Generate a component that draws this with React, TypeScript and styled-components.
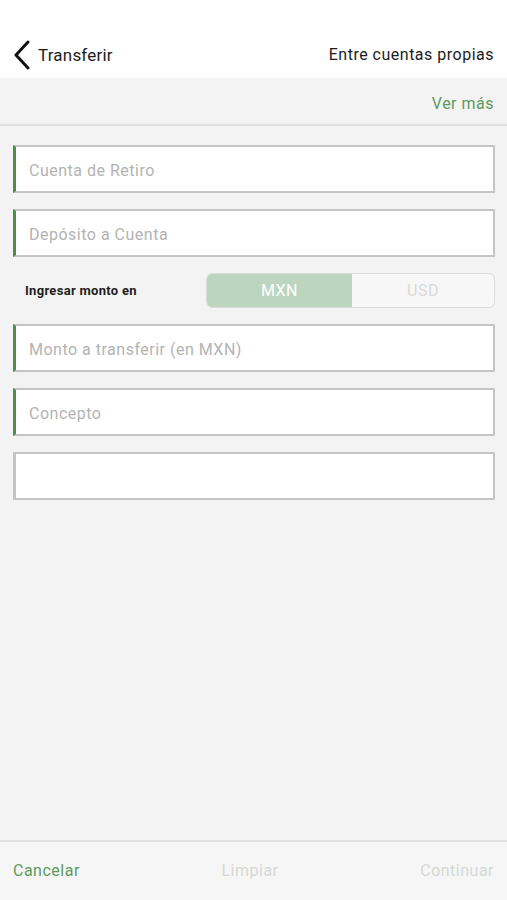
import styled, { createGlobalStyle } from "styled-components";

const GlobalStyle = createGlobalStyle`
  body {
    margin: 0;
    background: #f3f3f3;
    font-family: "Roboto", "Liberation Sans", sans-serif;
    letter-spacing: 0.5px;
  }
`;

export default function App() {
  return (
    <Page>
      <GlobalStyle />
      <Header>
        <BackButton>
          <svg width="18" height="30" viewBox="0 0 18 30">
            <path d="M15 2 L3 15 L15 28" fill="none" stroke="#111" strokeWidth="3" strokeLinecap="round" strokeLinejoin="round" />
          </svg>
          <Title>Transferir</Title>
        </BackButton>
        <Subtitle>Entre cuentas propias</Subtitle>
      </Header>
      <InfoBar>
        <GreenLink>Ver más</GreenLink>
      </InfoBar>
      <Form>
        <Field $marked placeholder="Cuenta de Retiro" />
        <Field $marked placeholder="Depósito a Cuenta" />
        <ToggleRow>
          <ToggleLabel>Ingresar monto en</ToggleLabel>
          <Segmented>
            <Segment $active>MXN</Segment>
            <Segment>USD</Segment>
          </Segmented>
        </ToggleRow>
        <Field $marked placeholder="Monto a transferir (en MXN)" />
        <Field $marked placeholder="Concepto" />
        <Field />
      </Form>
      <Footer>
        <FooterAction $enabled>Cancelar</FooterAction>
        <FooterAction>Limpiar</FooterAction>
        <FooterAction>Continuar</FooterAction>
      </Footer>
    </Page>
  );
}

const Page = styled.div`
  min-height: 100vh;
  display: flex;
  flex-direction: column;
  background: #f3f3f3;
`;

const Header = styled.div`
  height: 78px;
  box-sizing: border-box;
  padding: 31px 13px 0 13px;
  background: #ffffff;
  display: flex;
  align-items: center;
  justify-content: space-between;
`;

const BackButton = styled.div`
  display: flex;
  align-items: center;
  gap: 7px;
  svg {
    display: block;
  }
`;

const Title = styled.span`
  font-size: 17px;
  letter-spacing: 0.2px;
  color: #1c1c1c;
`;

const Subtitle = styled.span`
  font-size: 16px;
  color: #1c1c1c;
`;

const InfoBar = styled.div`
  height: 48px;
  box-sizing: border-box;
  padding: 4px 13px 0 13px;
  background: #f3f3f3;
  border-bottom: 2px solid #e1e1e1;
  display: flex;
  align-items: center;
  justify-content: flex-end;
`;

const GreenLink = styled.span`
  font-size: 16px;
  color: #5f9a5f;
`;

const Form = styled.div`
  flex: 1;
  display: flex;
  flex-direction: column;
  gap: 16px;
  padding: 19px 12px 0 13px;
`;

const Field = styled.input<{ $marked?: boolean }>`
  height: 48px;
  box-sizing: border-box;
  border: 2px solid #c4c4c4;
  border-left: 3px solid ${(p) => (p.$marked ? "#4a8f4a" : "#c4c4c4")};
  background: #ffffff;
  padding: 2px 13px 0 13px;
  font-family: inherit;
  font-size: 16px;
  letter-spacing: 0.5px;
  outline: none;
  &::placeholder {
    color: #b3b3b3;
  }
`;

const ToggleRow = styled.div`
  height: 35px;
  display: flex;
  align-items: center;
  justify-content: space-between;
  padding-left: 12px;
`;

const ToggleLabel = styled.span`
  font-size: 13px;
  font-weight: 700;
  letter-spacing: 0.3px;
  color: #1e1e1e;
`;

const Segmented = styled.div`
  width: 289px;
  height: 100%;
  box-sizing: border-box;
  display: grid;
  grid-template-columns: 145px 1fr;
  border: 1px solid #dcdcdc;
  border-radius: 6px;
  overflow: hidden;
  background: #f7f7f7;
`;

const Segment = styled.div<{ $active?: boolean }>`
  display: flex;
  align-items: center;
  justify-content: center;
  font-size: 16px;
  background: ${(p) => (p.$active ? "#bcd5be" : "transparent")};
  color: ${(p) => (p.$active ? "#ffffff" : "#d9d9d9")};
`;

const Footer = styled.div`
  height: 60px;
  box-sizing: border-box;
  border-top: 2px solid #e3e3e3;
  background: #f6f6f6;
  padding: 0 13px 2px 13px;
  display: flex;
  align-items: center;
  justify-content: space-between;
`;

const FooterAction = styled.span<{ $enabled?: boolean }>`
  font-size: 16px;
  color: ${(p) => (p.$enabled ? "#5f9a5f" : "#d5d8d5")};
`;
